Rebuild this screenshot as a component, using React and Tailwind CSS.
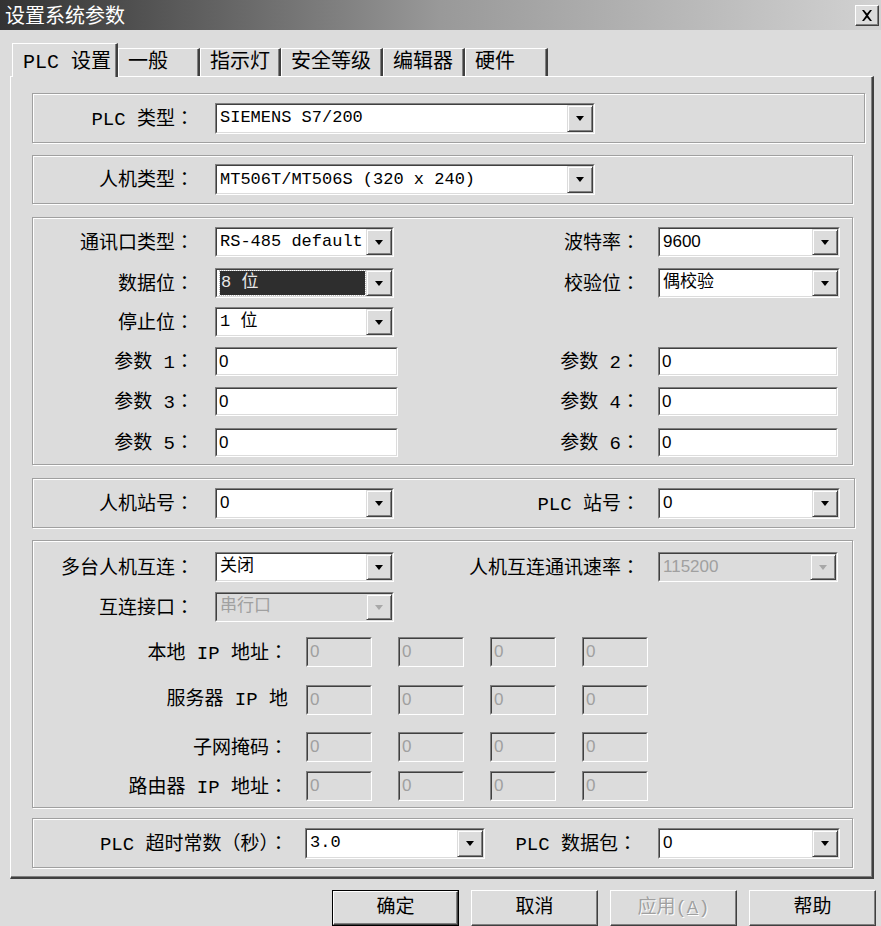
import React from 'react';

const MONO = "font-['Liberation_Mono','Noto_Sans_CJK_SC',monospace]";
const SANS = "font-['Liberation_Sans','Noto_Sans_CJK_SC',sans-serif]";

function Arrow({ disabled }) {
  return (
    <div className="w-[26px] shrink-0 flex items-center justify-center bg-[#dcdcdc] border border-t-[#dcdcdc] border-l-[#dcdcdc] border-b-[#404040] border-r-[#404040] shadow-[inset_1px_1px_0_#fff,inset_-1px_-1px_0_#808080]">
      <div className={disabled ? 'w-0 h-0 border-x-[4px] border-x-transparent border-t-[5px] border-t-[#a8a8a8]' : 'w-0 h-0 border-x-[4px] border-x-transparent border-t-[5px] border-t-black'} />
    </div>
  );
}

function Sunken({ className = '', disabled, children }) {
  return (
    <div className={`flex shrink-0 border border-t-[#808080] border-l-[#808080] border-b-white border-r-white ${className}`}>
      <div className={`flex flex-1 min-w-0 border border-t-[#404040] border-l-[#404040] border-b-[#dcdcdc] border-r-[#dcdcdc] ${disabled ? 'bg-[#dcdcdc]' : 'bg-white'}`}>
        {children}
      </div>
    </div>
  );
}

function Combo({ className, value, font = MONO, disabled, selected }) {
  return (
    <Sunken className={className} disabled={disabled}>
      <div className="flex-1 min-w-0 flex items-center pl-[3px] pr-[1px] overflow-hidden">
        {selected ? (
          <div className={`flex-1 h-[24px] flex items-center pl-[1px] bg-[#2e2e2e] text-[#e8e8e8] outline-1 outline-dotted outline-[#bbb] text-[17px] whitespace-nowrap ${font}`}>{value}</div>
        ) : (
          <span className={`text-[17px] whitespace-nowrap ${font} ${disabled ? 'text-[#a0a0a0]' : 'text-black'}`}>{value}</span>
        )}
      </div>
      <Arrow disabled={disabled} />
    </Sunken>
  );
}

function Input({ className, value = '0', disabled }) {
  return (
    <Sunken className={className} disabled={disabled}>
      <div className={`flex-1 flex items-center pl-[2px] text-[17px] ${SANS} ${disabled ? 'text-[#a0a0a0]' : 'text-black'}`}>{value}</div>
    </Sunken>
  );
}

// full-width colon centred in its cell, as the dialog font draws it
function Label({ className = '', children }) {
  let body = children;
  if (typeof children === 'string' && children.endsWith('：')) {
    body = (
      <>
        {children.slice(0, -1)}
        <span className="font-['Noto_Sans_CJK_TC',sans-serif]">：</span>
      </>
    );
  }
  return <div className={`shrink-0 text-right text-[19px] leading-[30px] whitespace-nowrap text-black ${className}`}>{body}</div>;
}

function Group({ className = '', children }) {
  return <div className={`shrink-0 border border-[#a0a0a0] shadow-[inset_1px_1px_0_#fff,1px_1px_0_#fff] ${className}`}>{children}</div>;
}

function Button({ children, def, disabled }) {
  const inner = (
    <div className="w-full h-full flex items-center justify-center border border-t-white border-l-white border-b-[#404040] border-r-[#404040] shadow-[inset_-1px_-1px_0_#808080]">
      <span className={disabled ? 'text-[19px] text-[#a0a0a0] [text-shadow:1px_1px_0_#fff]' : 'text-[19px] text-black'}>{children}</span>
    </div>
  );
  return def ? (
    <div className="w-[127px] h-[36px] border border-black">{inner}</div>
  ) : (
    <div className="w-[127px] h-[36px]">{inner}</div>
  );
}

function Tab({ children, active, className = '' }) {
  return active ? (
    <div className={`relative z-10 -mb-px h-[34px] flex items-start pt-[4px] pl-[10px] bg-[#dcdcdc] border-t border-l border-t-white border-l-white border-r-2 border-r-[#404040] shadow-[inset_-1px_0_0_#808080] text-[20px] ${className}`}>{children}</div>
  ) : (
    <div className={`h-[28px] flex items-center pl-[9px] border-t border-l border-t-white border-l-white border-r-2 border-r-[#404040] shadow-[inset_-1px_0_0_#808080] text-[20px] ${className}`}>{children}</div>
  );
}

export default function App() {
  return (
    <div className={`w-[881px] h-[926px] overflow-hidden bg-[#dcdcdc] text-black ${MONO}`}>
      <div className="h-[30px] flex items-center justify-between pl-[5px] pr-[2px] bg-gradient-to-r from-[#333333] via-[#999999] to-[#d2d2d2]">
        <span className="text-white text-[20px] font-['Noto_Sans_CJK_SC',sans-serif]">设置系统参数</span>
        <div className="w-[24px] h-[21px] flex items-center justify-center bg-[#dcdcdc] border border-t-white border-l-white border-b-[#404040] border-r-[#404040] shadow-[inset_-1px_-1px_0_#808080]">
          <svg width="12" height="11" viewBox="0 0 12 11">
            <path d="M1 0h2l3 3.5L9 0h2L7 5.5 11 11H9L6 7.5 3 11H1l4-5.5z" fill="#000" />
          </svg>
        </div>
      </div>

      <div className="flex items-end h-[46px] pl-[12px] relative z-10">
        <Tab active className="w-[106px]">PLC 设置</Tab>
        <Tab className="w-[82px]">一般</Tab>
        <Tab className="w-[81px]">指示灯</Tab>
        <Tab className="w-[102px]">安全等级</Tab>
        <Tab className="w-[82px]">编辑器</Tab>
        <Tab className="w-[83px]">硬件</Tab>
      </div>

      <div className="pl-[10px] pr-[7px]">
        <div className="h-[803px] flex flex-col pl-[21px] pt-[16px] border-t border-l border-t-white border-l-white border-r-2 border-b-2 border-r-[#404040] border-b-[#404040] shadow-[inset_-1px_-1px_0_#808080]">
          <Group className="w-[833px] h-[50px] flex items-center">
            <Label className="w-[161px]">PLC 类型：</Label>
            <Combo className="ml-[21px] w-[380px] h-[31px]" value="SIEMENS S7/200" />
          </Group>

          <Group className="mt-[12px] w-[821px] h-[49px] flex items-center">
            <Label className="w-[161px]">人机类型：</Label>
            <Combo className="ml-[21px] w-[380px] h-[31px]" value="MT506T/MT506S (320 x 240)" />
          </Group>

          <Group className="mt-[13px] w-[821px] h-[248px] flex flex-col pt-[9px]">
            <div className="flex items-center h-[30px]">
              <div className="flex items-center w-[370px]">
                <Label className="w-[161px]">通讯口类型：</Label>
                <Combo className="ml-[21px] w-[179px] h-[30px]" value="RS-485 default" />
              </div>
              <Label className="w-[237px]">波特率：</Label>
              <Combo className="ml-[18px] w-[182px] h-[30px]" value="9600" font={SANS} />
            </div>
            <div className="flex items-center h-[30px] mt-[11px]">
              <div className="flex items-center w-[370px]">
                <Label className="w-[161px]">数据位：</Label>
                <Combo className="ml-[21px] w-[179px] h-[30px]" value="8 位" selected />
              </div>
              <Label className="w-[237px]">校验位：</Label>
              <Combo className="ml-[18px] w-[182px] h-[30px]" value="偶校验" />
            </div>
            <div className="flex items-center h-[30px] mt-[9px]">
              <div className="flex items-center w-[370px]">
                <Label className="w-[161px]">停止位：</Label>
                <Combo className="ml-[21px] w-[179px] h-[30px]" value="1 位" />
              </div>
            </div>
            <div className="flex items-center h-[29px] mt-[10px]">
              <div className="flex items-center w-[370px]">
                <Label className="w-[161px]">参数 1：</Label>
                <Input className="ml-[21px] w-[183px] h-[29px]" />
              </div>
              <Label className="w-[237px]">参数 2：</Label>
              <Input className="ml-[18px] w-[180px] h-[29px]" />
            </div>
            <div className="flex items-center h-[29px] mt-[11px]">
              <div className="flex items-center w-[370px]">
                <Label className="w-[161px]">参数 3：</Label>
                <Input className="ml-[21px] w-[183px] h-[29px]" />
              </div>
              <Label className="w-[237px]">参数 4：</Label>
              <Input className="ml-[18px] w-[180px] h-[29px]" />
            </div>
            <div className="flex items-center h-[29px] mt-[12px]">
              <div className="flex items-center w-[370px]">
                <Label className="w-[161px]">参数 5：</Label>
                <Input className="ml-[21px] w-[183px] h-[29px]" />
              </div>
              <Label className="w-[237px]">参数 6：</Label>
              <Input className="ml-[18px] w-[180px] h-[29px]" />
            </div>
          </Group>

          <Group className="mt-[13px] w-[823px] h-[50px] flex items-center">
            <div className="flex items-center w-[370px]">
              <Label className="w-[161px]">人机站号：</Label>
              <Combo className="ml-[21px] w-[179px] h-[31px]" value="0" font={SANS} />
            </div>
            <Label className="w-[237px]">PLC 站号：</Label>
            <Combo className="ml-[18px] w-[182px] h-[31px]" value="0" font={SANS} />
          </Group>

          <Group className="mt-[12px] w-[821px] h-[268px] flex flex-col pt-[11px]">
            <div className="flex items-center h-[30px]">
              <div className="flex items-center w-[370px]">
                <Label className="w-[161px]">多台人机互连：</Label>
                <Combo className="ml-[21px] w-[179px] h-[30px]" value="关闭" />
              </div>
              <Label className="w-[237px]">人机互连通讯速率：</Label>
              <Combo className="ml-[18px] w-[180px] h-[30px]" value="115200" font={SANS} disabled />
            </div>
            <div className="flex items-center h-[30px] mt-[10px]">
              <Label className="w-[161px]">互连接口：</Label>
              <Combo className="ml-[21px] w-[179px] h-[30px]" value="串行口" disabled />
            </div>
            {[
              ['本地 IP 地址：', 'mt-[15px]'],
              ['服务器 IP 地', 'mt-[18px]'],
              ['子网掩码：', 'mt-[17px]'],
              ['路由器 IP 地址：', 'mt-[9px]'],
            ].map(([label, mt]) => (
              <div key={label} className={`flex items-center h-[30px] ${mt}`}>
                <Label className="w-[255px]">{label}</Label>
                <div className="flex gap-[26px] ml-[18px]">
                  <Input className="w-[66px] h-[30px]" disabled />
                  <Input className="w-[66px] h-[30px]" disabled />
                  <Input className="w-[66px] h-[30px]" disabled />
                  <Input className="w-[66px] h-[30px]" disabled />
                </div>
              </div>
            ))}
          </Group>

          <Group className="mt-[10px] w-[821px] h-[50px] flex items-center">
            <Label className="w-[255px]">PLC 超时常数（秒）：</Label>
            <Combo className="ml-[17px] w-[180px] h-[31px]" value="3.0" />
            <Label className="w-[152px]">PLC 数据包：</Label>
            <Combo className="ml-[21px] w-[182px] h-[31px]" value="0" font={SANS} />
          </Group>
        </div>
      </div>

      <div className="flex gap-[12px] pl-[332px] mt-[11px]">
        <Button def>确定</Button>
        <Button>取消</Button>
        <Button disabled>应用(<span className="underline">A</span>)</Button>
        <Button>帮助</Button>
      </div>
    </div>
  );
}
